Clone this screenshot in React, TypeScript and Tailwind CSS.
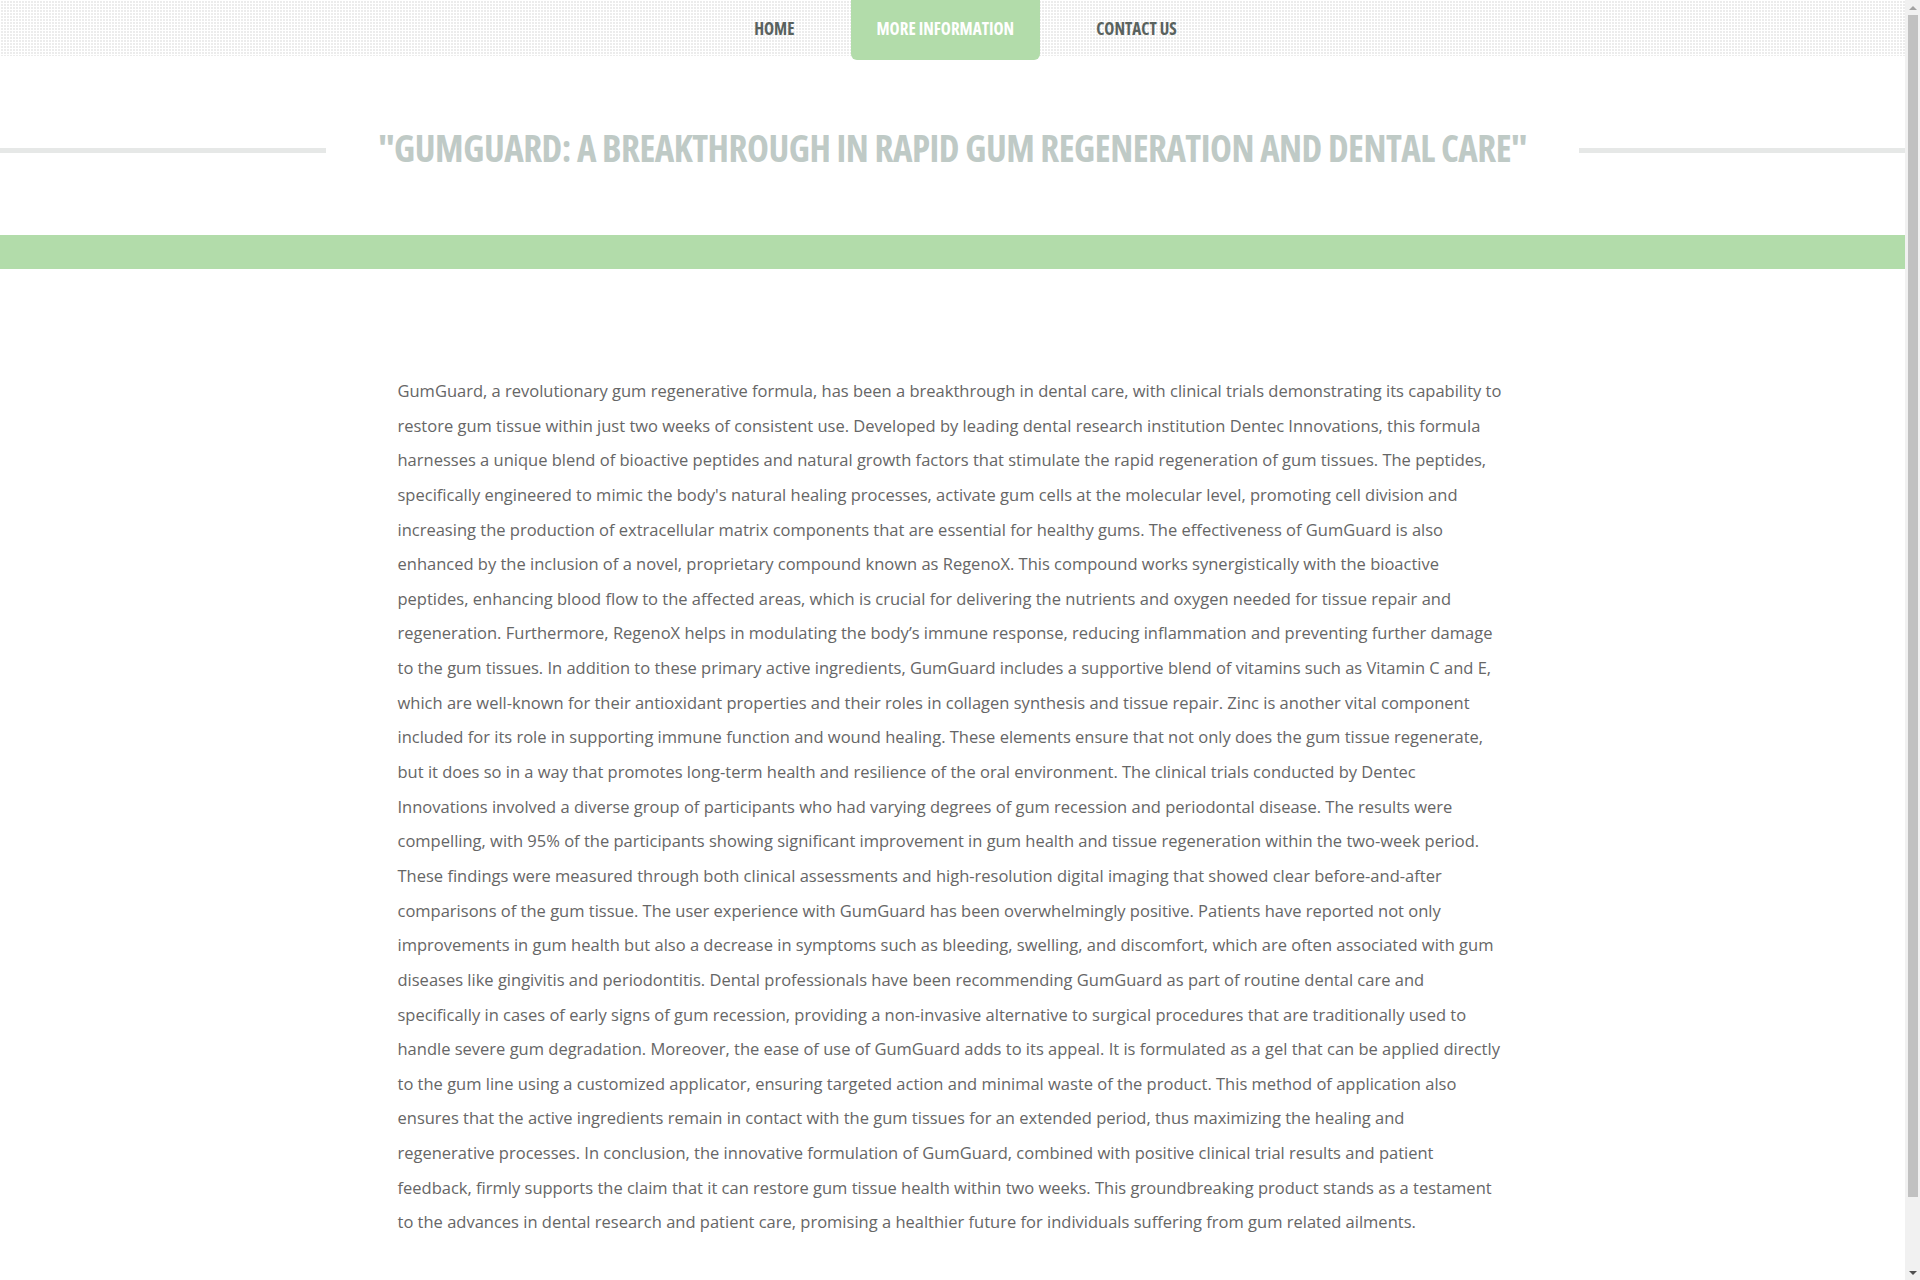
import React from "react";

const navItems = ["Home", "More Information", "Contact Us"];

const bodyText =
  "GumGuard, a revolutionary gum regenerative formula, has been a breakthrough in dental care, with clinical trials demonstrating its capability to restore gum tissue within just two weeks of consistent use. Developed by leading dental research institution Dentec Innovations, this formula harnesses a unique blend of bioactive peptides and natural growth factors that stimulate the rapid regeneration of gum tissues. The peptides, specifically engineered to mimic the body's natural healing processes, activate gum cells at the molecular level, promoting cell division and increasing the production of extracellular matrix components that are essential for healthy gums. The effectiveness of GumGuard is also enhanced by the inclusion of a novel, proprietary compound known as RegenoX. This compound works synergistically with the bioactive peptides, enhancing blood flow to the affected areas, which is crucial for delivering the nutrients and oxygen needed for tissue repair and regeneration. Furthermore, RegenoX helps in modulating the body\u2019s immune response, reducing inflammation and preventing further damage to the gum tissues. In addition to these primary active ingredients, GumGuard includes a supportive blend of vitamins such as Vitamin C and E, which are well-known for their antioxidant properties and their roles in collagen synthesis and tissue repair. Zinc is another vital component included for its role in supporting immune function and wound healing. These elements ensure that not only does the gum tissue regenerate, but it does so in a way that promotes long-term health and resilience of the oral environment. The clinical trials conducted by Dentec Innovations involved a diverse group of participants who had varying degrees of gum recession and periodontal disease. The results were compelling, with 95% of the participants showing significant improvement in gum health and tissue regeneration within the two-week period. These findings were measured through both clinical assessments and high-resolution digital imaging that showed clear before-and-after comparisons of the gum tissue. The user experience with GumGuard has been overwhelmingly positive. Patients have reported not only improvements in gum health but also a decrease in symptoms such as bleeding, swelling, and discomfort, which are often associated with gum diseases like gingivitis and periodontitis. Dental professionals have been recommending GumGuard as part of routine dental care and specifically in cases of early signs of gum recession, providing a non-invasive alternative to surgical procedures that are traditionally used to handle severe gum degradation. Moreover, the ease of use of GumGuard adds to its appeal. It is formulated as a gel that can be applied directly to the gum line using a customized applicator, ensuring targeted action and minimal waste of the product. This method of application also ensures that the active ingredients remain in contact with the gum tissues for an extended period, thus maximizing the healing and regenerative processes. In conclusion, the innovative formulation of GumGuard, combined with positive clinical trial results and patient feedback, firmly supports the claim that it can restore gum tissue health within two weeks. This groundbreaking product stands as a testament to the advances in dental research and patient care, promising a healthier future for individuals suffering from gum related ailments.";

function Scrollbar() {
  return (
    <div className="w-[15px] h-screen shrink-0 bg-[#f1f1f1] flex flex-col items-center">
      <div className="h-[15px] flex items-center justify-center">
        <div className="w-0 h-0 border-x-[4px] border-x-transparent border-b-[4px] border-b-[#a3a3a3]" />
      </div>
      <div className="w-[10px] h-[1182px] bg-[#c1c1c1]" />
      <div className="flex-1" />
      <div className="h-[15px] flex items-center justify-center">
        <div className="w-0 h-0 border-x-[4px] border-x-transparent border-t-[4px] border-t-[#505050]" />
      </div>
    </div>
  );
}

export default function App() {
  return (
    <div className="flex h-screen overflow-hidden bg-white font-['Open_Sans',sans-serif]">
      <div className="flex-1 min-w-0">
        {/* Top navigation */}
        <nav className="h-14 bg-[#ececec] bg-[linear-gradient(to_right,#ffffff_1px,transparent_1px),linear-gradient(to_bottom,#ffffff_1px,transparent_1px)] [background-size:3px_3px]">
          <ul className="flex justify-center gap-[30px] pl-[26px]">
            {navItems.map((item) => {
              const active = item === "More Information";
              return (
                <li key={item}>
                  <a
                    href="#"
                    className={`block px-[26px] h-14 leading-[58px] text-[17px] font-bold uppercase [font-stretch:75%] ${
                      active
                        ? "h-[60px] bg-[#b2dcaa] text-white rounded-b-md"
                        : "text-[#59625e]"
                    }`}
                  >
                    {item}
                  </a>
                </li>
              );
            })}
          </ul>
        </nav>

        {/* Page heading */}
        <header className="flex items-center h-[179px] pt-[10px]">
          <div className="flex-1 h-[5px] bg-[#e6e8e7]" />
          <h1 className="px-[52px] mb-[6px] text-[37px] leading-none font-bold uppercase text-[#bfcac6] [font-stretch:75%] tracking-[-0.5px]">
            "GumGuard: A Breakthrough in Rapid Gum Regeneration and Dental Care"
          </h1>
          <div className="flex-1 h-[5px] bg-[#e6e8e7]" />
        </header>

        <div className="h-[34px] bg-[#b2dcaa]" />

        {/* Article */}
        <main className="max-w-[1170px] mx-auto pl-[30px] pr-[33px] pt-[105px] pb-[60px]">
          <p className="text-[16.5px] leading-[34.64px] text-[#666666]">{bodyText}</p>
        </main>
      </div>
      <Scrollbar />
    </div>
  );
}
